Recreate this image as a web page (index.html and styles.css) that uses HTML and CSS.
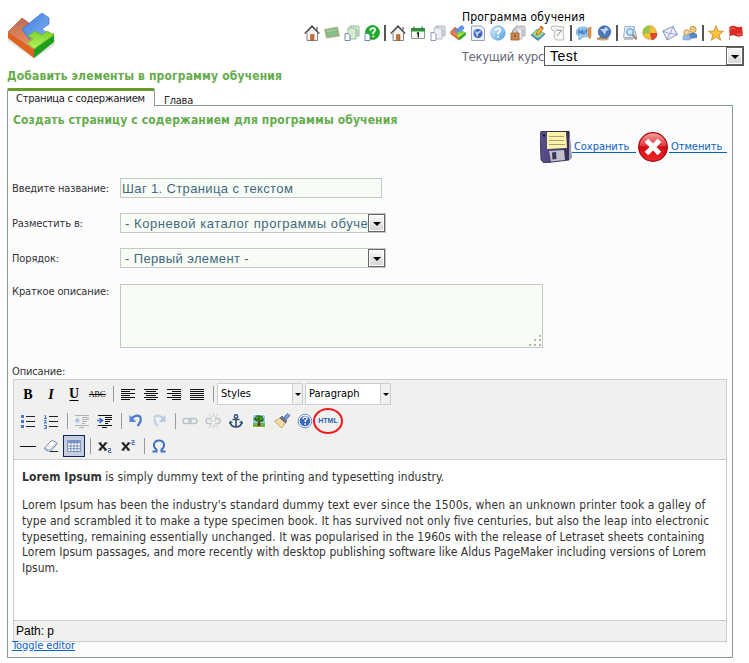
FILE: index.html
```html
<!DOCTYPE html>
<html lang="ru">
<head>
<meta charset="utf-8">
<title>Программа обучения</title>
<link rel="stylesheet" href="styles.css">
</head>
<body>
<svg class="defs" aria-hidden="true">
  <defs>
    <linearGradient id="gb" x1="0" y1="0" x2="1" y2="1"><stop offset="0" stop-color="#3f78dc"/><stop offset="1" stop-color="#7fb4f4"/></linearGradient>
    <linearGradient id="go" x1="0" y1="0" x2="0" y2="1"><stop offset="0" stop-color="#b96a58"/><stop offset="1" stop-color="#f5965e"/></linearGradient>
    <linearGradient id="gg" x1="0" y1="0" x2="0" y2="1"><stop offset="0" stop-color="#7fd02c"/><stop offset="1" stop-color="#b4f45c"/></linearGradient>
    <linearGradient id="gr" x1="0" y1="0" x2="0" y2="1"><stop offset="0" stop-color="#f7a0a0"/><stop offset=".45" stop-color="#e23a3c"/><stop offset=".5" stop-color="#d40a10"/><stop offset="1" stop-color="#f02a2a"/></linearGradient>
    <linearGradient id="gs" x1="0" y1="0" x2="1" y2="1"><stop offset="0" stop-color="#e8f6ff"/><stop offset="1" stop-color="#4b9be0"/></linearGradient>
    <linearGradient id="gf" x1="0" y1="0" x2="1" y2="0"><stop offset="0" stop-color="#5a528c"/><stop offset="1" stop-color="#332c58"/></linearGradient>
    <symbol id="cubes" viewBox="0 0 48 48">
      <path d="M1 22v7l26 18 21-14v-8l-21 14z" fill="#c9c9c9" opacity=".5"/>
      <path d="M1 20v6l26 20v-8z" fill="#e0621c"/>
      <path d="M27 37v9l20-16v-9z" fill="#1fa01c"/>
      <path d="M1 20L15 6l7 5-7 7 19 13-7 7z" fill="url(#go)" stroke="#c4582c" stroke-width=".7"/>
      <path d="M15 17L35 1l7 5v6l-7 5 6 5-6 4-6-4-7 5z" fill="url(#gb)" stroke="#3a6cc4" stroke-width=".7"/>
      <path d="M21 24l7-5 7 4 5-4 7 4-20 14-7-6 6-4z" fill="url(#gg)" stroke="#5cba20" stroke-width=".7"/>
    </symbol>
    <symbol id="home" viewBox="0 0 16 16"><path d="M3 7.500v8h10.500v-8L8 2z" fill="#f6f3ee" stroke="#777" stroke-width=".9"/><path d="M12 2h2v4l-2-2z" fill="#999"/><path d="M.6 8.600L8 1l7.400 7.600" fill="none" stroke="#444" stroke-width="1.300"/><path d="M6.500 9.500h3.500v6H6.500z" fill="#c4703a" stroke="#8a4a20" stroke-width=".5"/></symbol>
    <symbol id="board" viewBox="0 0 16 16"><path d="M.5 4.500l13-2.500 2 9L2.500 13z" fill="#86bd8c" stroke="#c8a878" stroke-width=".9"/><path d="M3 6.500l9-1.500" stroke="#a8d4ac"/></symbol>
    <symbol id="pages" viewBox="0 0 16 16"><path d="M6 1h8q1 0 1 1v9h-2V5H6z" fill="#e4e7ee" stroke="#9ea5b4" stroke-width=".8"/><path d="M4 3h8v11H4z" fill="#eef0f6" stroke="#a4abba" stroke-width=".8"/><path d="M1 7.500h3l2 2v6H1z" fill="#fff" stroke="#8090b8" stroke-width=".9"/></symbol>
    <symbol id="gpages" viewBox="0 0 16 16"><path d="M6 1h8q1 0 1 1v9h-2V5H6z" fill="#dcefdc" stroke="#78a878" stroke-width=".8"/><path d="M4 3h8v11H4z" fill="#d5ecd5" stroke="#86b486" stroke-width=".8"/><path d="M1 8.500h3l2 2v5H1z" fill="#fff" stroke="#6080b0" stroke-width=".9"/></symbol>
    <symbol id="ghelp" viewBox="0 0 16 16"><circle cx="8.500" cy="7.500" r="7" fill="#1dae27" stroke="#128a1c" stroke-width=".7"/><path d="M6.200 5.500q.5-2.500 2.800-2.300 2.500.3 2 2.300-.3 1-1.800 2v1.800" fill="none" stroke="#fff" stroke-width="1.800"/><path d="M8.400 10.700h1.800v1.500H8.400z" fill="#fff"/><path d="M1 8.500h3l2 2v5H1z" fill="#fff" stroke="#6080b0" stroke-width=".9"/></symbol>
    <symbol id="cal" viewBox="0 0 16 16"><path d="M1.500 3.500h13v10h-13z" fill="#f4f8f2" stroke="#889888"/><path d="M1 3h14v3.500H1z" fill="#2d9436"/><path d="M4 1.500v3M12 1.500v3" stroke="#567" stroke-width="1.300"/><path d="M6.800 8.500L8.300 8v4.500" stroke="#222" fill="none" stroke-width="1.400"/></symbol>
    <symbol id="webpage" viewBox="0 0 16 16"><path d="M1.500 1h10l3 3v11.500h-13z" fill="#edf1fb" stroke="#8c98b8" stroke-width=".9"/><circle cx="8" cy="8.500" r="4.500" fill="#4068bc"/><path d="M5 6l3 1 2-2 1 2-3 2 0 3-2-2z" fill="#b9d2f6"/></symbol>
    <symbol id="bhelp" viewBox="0 0 16 16"><circle cx="8" cy="8" r="7.200" fill="url(#gs)" stroke="#6ca8e0" stroke-width=".8"/><path d="M5.700 6q.5-2.500 2.500-2.400 2.400.2 2 2.100-.3 1.100-2 2.100v1.600" fill="none" stroke="#fff" stroke-width="1.700"/><path d="M7.200 10.900H9v1.700H7.200z" fill="#fff"/></symbol>
    <symbol id="lockpages" viewBox="0 0 16 16"><path d="M6 1h8q1 0 1 1v9h-2V5H6z" fill="#e2e2ec" stroke="#999" stroke-width=".8"/><path d="M4 3h8v11H4z" fill="#ececf2" stroke="#a4a4b4" stroke-width=".8"/><path d="M2.500 8V6q2-3 4.500 0v2" fill="none" stroke="#998" stroke-width="1.200"/><path d="M1 8h8v7H1z" fill="#cd8850" stroke="#945828" stroke-width=".8"/><path d="M4.500 10h1v2h-1z" fill="#613"/></symbol>
    <symbol id="pencilbook" viewBox="0 0 16 16"><path d="M1 10l6-6 8 5-7 6.500z" fill="#3e8bd8" stroke="#2462a8" stroke-width=".6"/><path d="M2 9l5-5 7 4.500-6 5z" fill="#9edc80"/><path d="M6 10l1-3 4-6 2.500 2-4 6z" fill="#efb43c" stroke="#9a6020" stroke-width=".7"/><path d="M10.500 1.500l2.500 2" stroke="#d85848" stroke-width="1.500"/></symbol>
    <symbol id="paper" viewBox="0 0 16 16"><path d="M1 2l3-1 10 1-1 4 1 9-8 0-2-3 1-6-3-1z" fill="#f8f8f8" stroke="#aaa" stroke-width=".8"/><path d="M6 5l6 .5M7 11l4-5" stroke="#888" stroke-width=".9"/></symbol>
    <symbol id="chat" viewBox="0 0 16 16"><path d="M0 7q1-5 7-5t7 5-7 5l-4 3v-4Q0 10 0 7z" fill="#9fd0f2" stroke="#65a0d2" stroke-width=".8"/><path d="M3 4.500v5M6 4.500v5M3 7h3M8 6v3.500M8 4.300v1M10.300 4.300v3.500M10.300 8.500v1" stroke="#2457a2" stroke-width="1.100"/><path d="M12.500 3l2.500-1v9l-1.500 3-1-3z" fill="#ed9c32" stroke="#b05a20" stroke-width=".5"/></symbol>
    <symbol id="globe" viewBox="0 0 16 16"><ellipse cx="7" cy="13.500" rx="6" ry="2" fill="#c9aa82"/><circle cx="8.500" cy="7" r="6.300" fill="#4b78b8" stroke="#355c98" stroke-width=".6"/><path d="M4 4l4 0 2-2 3 3-3 1-1 4-2-3z" fill="#c3d8f2"/><path d="M1 14l7-1 3 1" stroke="#a98358" fill="none"/></symbol>
    <symbol id="search" viewBox="0 0 16 16"><path d="M3 1.500h9v11H1.500z" fill="#e8f2fc" stroke="#8ea8cc" stroke-width=".9"/><path d="M12 2l3 11H9" fill="#cad6e6" stroke="#90a0b4" stroke-width=".8"/><circle cx="8" cy="7" r="3.400" fill="#c4e5fa" stroke="#5b8dbb"/><path d="M10.500 9.500l4 5" stroke="#a38254" stroke-width="1.800"/><path d="M2 14h9" stroke="#889"/></symbol>
    <symbol id="pie" viewBox="0 0 16 16"><circle cx="7.500" cy="7.500" r="6.800" fill="#f5c13c" stroke="#ca9028" stroke-width=".7"/><path d="M7.500 8V.7A7 7 0 0 0 1 9z" fill="#8dc650"/><path d="M8.500 8.500H15q0 5-5 6.500z" fill="#e44632" stroke="#aa2c20" stroke-width=".6"/></symbol>
    <symbol id="mail" viewBox="0 0 16 16"><path d="M.8 6L11 1.500l4.300 8L5.200 15z" fill="#eceffc" stroke="#7c82b2" stroke-width=".9"/><path d="M.8 6l7.500 3L11 1.500M5.200 15l2-6M15.300 9.500L9 8.500" fill="none" stroke="#8d92c0" stroke-width=".8"/></symbol>
    <symbol id="users" viewBox="0 0 16 16"><path d="M7 14V9q3-3 8 0v4z" fill="#5686c8"/><circle cx="11" cy="4.500" r="3.200" fill="#f4c878" stroke="#bd8330" stroke-width=".8"/><path d="M1 15v-4q3-4 7 0v4z" fill="#94bce8" stroke="#6b96c0" stroke-width=".5"/><circle cx="4.500" cy="7.500" r="2.700" fill="#fad69c" stroke="#ba842e" stroke-width=".8"/></symbol>
    <symbol id="star" viewBox="0 0 16 16"><path d="M8 .8l2 5.200 5.500.3-4.300 3.500 1.500 5.500L8 12l-4.700 3.300 1.500-5.500L.5 6.300 6 6z" fill="#fbc23e" stroke="#c88528" stroke-width=".8"/></symbol>
    <symbol id="flag" viewBox="0 0 16 16"><path d="M1.500 2v13" stroke="#c8a8a0"/><path d="M1.500 2Q5 0 8 1.500t6 0l1 9q-4 2-7 .5t-6 0z" fill="#d92a24"/><path d="M2 4q3-2 5 0M9 9q3 1 5 0" stroke="#f27a6c" fill="none"/></symbol>

    <symbol id="bold" viewBox="0 0 22 22"><text x="11" y="16" class="glyph">B</text></symbol>
    <symbol id="italic" viewBox="0 0 22 22"><text x="11" y="16" class="glyph gi">I</text></symbol>
    <symbol id="under" viewBox="0 0 22 22"><text x="11" y="15" class="glyph">U</text><path d="M6.500 17.500h9" stroke="#000"/></symbol>
    <symbol id="strike" viewBox="0 0 22 22"><text x="11" y="14" class="glyph gx">ABC</text><path d="M3 11.500h17" stroke="#000"/></symbol>
    <symbol id="al" viewBox="0 0 22 22"><path d="M4 6.500h14M4 8.500h9M4 10.500h14M4 12.500h9M4 14.500h14M4 16.500h9" stroke="#111"/></symbol>
    <symbol id="ac" viewBox="0 0 22 22"><path d="M4 6.500h14M6 8.500h10M4 10.500h14M6 12.500h10M4 14.500h14M6 16.500h10" stroke="#111"/></symbol>
    <symbol id="ar" viewBox="0 0 22 22"><path d="M4 6.500h14M9 8.500h9M4 10.500h14M9 12.500h9M4 14.500h14M9 16.500h9" stroke="#111"/></symbol>
    <symbol id="aj" viewBox="0 0 22 22"><path d="M4 6.500h14M4 8.500h14M4 10.500h14M4 12.500h14M4 14.500h14M4 16.500h14" stroke="#111"/></symbol>
    <symbol id="ul" viewBox="0 0 22 22"><path d="M9 6.500h9M9 11.500h9M9 16.500h9" stroke="#222"/><path d="M4 5h3v3H4zM4 10h3v3H4zM4 15h3v3H4z" fill="#4a76c8"/></symbol>
    <symbol id="ol" viewBox="0 0 22 22"><path d="M9 6.500h9M9 11.500h9M9 16.500h9" stroke="#222"/><path d="M4.500 5.500h1v3M4 8.500h3M4 10.500h2v1.500l-2 1h3M4 15.500h2.500v3H4M5 17h1.500" fill="none" stroke="#4a76c8"/></symbol>
    <symbol id="outd" viewBox="0 0 22 22"><path d="M4 5.500h14M11 7.500h7M11 9.500h7M11 11.500h5M11 13.500h3M4 15.500h14M8 17.500h5" stroke="#b0b0b0"/><path d="M9 10.500H5M7.500 8L4.500 10.500 7.500 13" stroke="#a9c2e2" fill="none" stroke-width="1.500"/></symbol>
    <symbol id="ind" viewBox="0 0 22 22"><path d="M4 5.500h14M11 7.500h7M11 9.500h7M11 11.500h5M11 13.500h3M4 15.500h14M8 17.500h5" stroke="#111"/><path d="M3 10.500h5M5.500 8l3 2.500-3 2.500" stroke="#3d6fc4" fill="none" stroke-width="1.500"/></symbol>
    <symbol id="undo" viewBox="0 0 22 22"><path d="M6 9q5-5 9-2.500 2.500 4-2.500 9.500" fill="none" stroke="#4b78cc" stroke-width="2.200"/><path d="M4.500 5v7h7z" fill="#5683d4"/></symbol>
    <symbol id="redo" viewBox="0 0 22 22"><path d="M16 9Q11 4 7 6.500q-2 4 2.500 9.500" fill="none" stroke="#c0cfe4" stroke-width="2.200"/><path d="M17.500 5v7h-7z" fill="#b9cae4"/></symbol>
    <symbol id="link" viewBox="0 0 22 22"><rect x="4" y="8.500" width="8" height="5" rx="2.500" fill="none" stroke="#bcc3cb" stroke-width="1.500"/><rect x="10" y="8.500" width="8" height="5" rx="2.500" fill="none" stroke="#bcc3cb" stroke-width="1.500"/></symbol>
    <symbol id="unlink" viewBox="0 0 22 22"><path d="M9.500 9Q4 7.500 4 11t5.500 2.500M13 9q5-1.500 5 2t-5 2.500" fill="none" stroke="#bcc3cb" stroke-width="1.600"/><path d="M7 4l3 4M11.500 3v4M16 4l-3 4M7 18l2-3M11.500 18v-3M16 18l-3-3M8 11h6" stroke="#c0c6cd" stroke-width=".9"/></symbol>
    <symbol id="anchor" viewBox="0 0 22 22"><path d="M11 8v9M7.500 9.500h7M5 12q1 5 6 5t6-5" fill="none" stroke="#335078" stroke-width="1.600"/><circle cx="11" cy="6.500" r="1.700" fill="none" stroke="#335078" stroke-width="1.400"/><path d="M4 14l1-3.500 3 2zM18 14l-1-3.500-3 2z" fill="#335078"/></symbol>
    <symbol id="image" viewBox="0 0 22 22"><path d="M4 4h14v14H4z" fill="#fff"/><path d="M5 5h12v8H5z" fill="#8fcaf0"/><path d="M5 13h12v4H5z" fill="#70b438"/><path d="M10 11h2l.5 5h-3z" fill="#5b3819"/><path d="M6 10q-1-2 1.500-3Q9 4 11.500 5.500 15 5 15 8q2 2-.5 3.500-4 1.500-8.500-1.500z" fill="#33751c"/><path d="M8 8l2-1M12 9l2-1" stroke="#90c048"/></symbol>
    <symbol id="clean" viewBox="0 0 22 22"><path d="M3.500 11l5.500-3 5.500 5-4 5z" fill="#f1dda0" stroke="#b0985a" stroke-width=".8"/><path d="M9 8L11 6l5 5-1.500 2z" fill="#68748c" stroke="#4a5468" stroke-width=".6"/><path d="M12.500 7.500L16.500 3.500 19 5.500l-4 4.500z" fill="#7c9ad0" stroke="#45629c" stroke-width=".7"/></symbol>
    <symbol id="help" viewBox="0 0 22 22"><circle cx="11" cy="11" r="6.800" fill="#fff" stroke="#4472bc" stroke-width=".8"/><circle cx="11" cy="11" r="5.300" fill="#3a68c0"/><path d="M9 9q.4-2 2.100-2 2.200.2 1.900 1.900-.2.900-1.800 1.800v1.400" fill="none" stroke="#fff" stroke-width="1.500"/><path d="M10.400 13.300H12v1.500h-1.600z" fill="#fff"/></symbol>
    <symbol id="hr" viewBox="0 0 22 22"><path d="M3 11.500h16" stroke="#111"/></symbol>
    <symbol id="eraser" viewBox="0 0 22 22"><path d="M4.500 13L11 6q1-1 2.500 0l3 1.500q1 1 0 2L11 15.500q-1 1-2.500.5L5 14.500q-1-.5-.5-1.500z" fill="#fff" stroke="#7187ac"/><path d="M4.500 13l5 2 7-7" fill="none" stroke="#9aabca"/><path d="M10 16.500h8" stroke="#222"/></symbol>
    <symbol id="grid" viewBox="0 0 22 22"><path d="M4 5h14v12H4z" fill="#fff" stroke="#6a86b4"/><path d="M4 5h14v3H4z" fill="#7d9ace"/><path d="M4 11h14M4 14h14M7.500 5v12M11 5v12M14.500 5v12" stroke="#6a86b4"/></symbol>
    <symbol id="sub" viewBox="0 0 22 22"><path d="M5.500 8l6.500 7M12 8l-6.500 7" stroke="#222" stroke-width="2"/><path d="M4.500 8h3M10.500 8h3M4.500 15h3M10 15h3" stroke="#222" stroke-width="1.200"/><path d="M14 13.500h2.500v2h-2v2h3" fill="none" stroke="#3a6cc8"/></symbol>
    <symbol id="sup" viewBox="0 0 22 22"><path d="M5.500 8l6.500 7M12 8l-6.500 7" stroke="#222" stroke-width="2"/><path d="M4.500 8h3M10.500 8h3M4.500 15h3M10 15h3" stroke="#222" stroke-width="1.200"/><path d="M14.500 5.500h2.500v2h-2v2h3" fill="none" stroke="#3a6cc8"/></symbol>
    <symbol id="omega" viewBox="0 0 22 22"><path d="M4.500 16.500h4v-2Q5.500 12.500 6 9q1-3.500 5-3.500T16 9q.5 3.500-2.500 5.500v2h4" fill="none" stroke="#3f70c8" stroke-width="2"/></symbol>
  </defs>
</svg>

<header class="header">
  <svg class="logo"><use href="#cubes"/></svg>
  <div class="header-right">
    <div class="page-name">Программа обучения</div>
    <nav class="icons">
      <svg><use href="#home"/></svg><svg><use href="#board"/></svg><svg><use href="#gpages"/></svg><svg><use href="#ghelp"/></svg>
      <i></i>
      <svg><use href="#home"/></svg><svg><use href="#cal"/></svg><svg><use href="#pages"/></svg><svg><use href="#cubes"/></svg><svg><use href="#webpage"/></svg><svg><use href="#bhelp"/></svg><svg><use href="#lockpages"/></svg><svg><use href="#pencilbook"/></svg><svg><use href="#paper"/></svg>
      <i></i>
      <svg><use href="#chat"/></svg><svg><use href="#globe"/></svg>
      <i></i>
      <svg><use href="#search"/></svg><svg><use href="#pie"/></svg><svg><use href="#mail"/></svg><svg><use href="#users"/></svg>
      <i></i>
      <svg><use href="#star"/></svg><svg><use href="#flag"/></svg>
    </nav>
    <div class="course"><span class="course-label">Текущий курс</span><div class="course-select"><span>Test</span><b class="drop"></b></div></div>
  </div>
</header>

<h1>Добавить элементы в программу обучения</h1>
<div class="tabs"><div class="tab active">Страница с содержанием</div><div class="tab">Глава</div></div>

<main class="panel">
  <h2>Создать страницу с содержанием для программы обучения</h2>
  <div class="actions">
    <svg viewBox="0 0 32 32"><path d="M0 1.500L2 0h27l2 26-2 3-25 3L1 29z" fill="url(#gf)" stroke="#292347" stroke-width=".8"/><path d="M29 0l3 27-3 2.500z" fill="#9b98a8"/><path d="M7 1h19l1 16-20 1z" fill="#fbf3a8"/><path d="M9 5.500h15M9 9.500h15M9 13.500h16" stroke="#a9a276" stroke-width="1.200"/><path d="M9 20l15-1 1 10-14 1.500z" fill="#bfc0cb"/><path d="M12 21.500l4-.5.500 7-4 .5z" fill="#3a3558"/><path d="M3 3.500h2v2H3z" fill="#15122c"/></svg>
    <a class="save">Сохранить</a>
    <svg viewBox="0 0 32 32"><circle cx="16" cy="16" r="14.300" fill="url(#gr)" stroke="#a00c10" stroke-width="1.200"/><path d="M9.500 9.500l13 13M22.500 9.500l-13 13" stroke="#fff" stroke-width="5"/></svg>
    <a class="cancel">Отменить</a>
  </div>
  <div class="form">
    <label>Введите название:</label><div class="field text">Шаг 1. Страница с текстом</div>
    <label>Разместить в:</label><div class="field select"><span class="catalog">- Корневой каталог программы обуче</span><b class="drop"></b></div>
    <label>Порядок:</label><div class="field select"><span>- Первый элемент -</span><b class="drop"></b></div>
    <label class="top">Краткое описание:</label><div class="field area"><svg class="grip" viewBox="0 0 13 13"><path d="M10 1h2v2h-2zM5 5h2v2H5zM10 5h2v2h-2zM0 10h2v2H0zM5 10h2v2H5zM10 10h2v2h-2z" fill="#b3bab3"/></svg></div>
  </div>
  <div class="desc-label">Описание:</div>
  <div class="editor">
    <div class="toolbar">
      <div class="row first">
        <svg><use href="#bold"/></svg><svg><use href="#italic"/></svg><svg><use href="#under"/></svg><svg><use href="#strike"/></svg><i></i>
        <svg><use href="#al"/></svg><svg><use href="#ac"/></svg><svg><use href="#ar"/></svg><svg><use href="#aj"/></svg><i></i>
        <div class="mini"><span>Styles</span><b></b></div><div class="mini"><span>Paragraph</span><b></b></div>
      </div>
      <div class="row">
        <svg><use href="#ul"/></svg><svg><use href="#ol"/></svg><i></i>
        <svg><use href="#outd"/></svg><svg><use href="#ind"/></svg><i></i>
        <svg><use href="#undo"/></svg><svg><use href="#redo"/></svg><i></i>
        <svg><use href="#link"/></svg><svg><use href="#unlink"/></svg><svg><use href="#anchor"/></svg><svg><use href="#image"/></svg><svg><use href="#clean"/></svg><svg><use href="#help"/></svg>
        <div class="html-btn">HTML</div>
      </div>
      <div class="row">
        <svg><use href="#hr"/></svg><svg><use href="#eraser"/></svg><svg class="on"><use href="#grid"/></svg><i></i>
        <svg><use href="#sub"/></svg><svg><use href="#sup"/></svg><i></i><svg><use href="#omega"/></svg>
      </div>
    </div>
    <div class="content">
      <p><span class="l1"><strong>Lorem Ipsum</strong> is simply dummy text of the printing and typesetting industry.</span></p>
      <p><span class="l2">Lorem Ipsum has been the industry's standard dummy text ever since the 1500s, when an unknown printer took a galley of</span><br>
      <span class="l3">type and scrambled it to make a type specimen book. It has survived not only five centuries, but also the leap into electronic</span><br>
      <span class="l4">typesetting, remaining essentially unchanged. It was popularised in the 1960s with the release of Letraset sheets containing</span><br>
      <span class="l5">Lorem Ipsum passages, and more recently with desktop publishing software like Aldus PageMaker including versions of Lorem</span><br>
      <span>Ipsum.</span></p>
    </div>
    <div class="status">Path: p</div>
  </div>
  <a class="toggle">Toggle editor</a>
</main>
</body>
</html>
```
FILE: styles.css
```css
*, ::after { box-sizing: border-box; }
body { margin: 0; width: 749px; height: 663px; overflow: hidden; background: #fff; color: #333; font: 12px/16px "DejaVu Sans Condensed", "DejaVu Sans", sans-serif; font-stretch: condensed; white-space: nowrap; }
.defs { position: absolute; width: 0; height: 0; }
.header { display: flex; justify-content: space-between; height: 68px; padding: 0 5px 0 7px; }
.logo { width: 48px; height: 48px; margin-top: 12px; }
.header-right { display: flex; flex-direction: column; align-items: flex-end; padding-top: 9px; }
.page-name { width: 282px; height: 16px; color: #000; letter-spacing: .15px; }
.icons { display: flex; gap: 4px; height: 16px; }
.icons svg { width: 16px; height: 16px; }
.icons i { width: 2px; background: #555; }
.course { display: flex; height: 20px; margin-top: 5px; font-size: 13px; line-height: 21px; color: #68687c; }
.course-label { letter-spacing: -.32px; }
.course-select { display: flex; justify-content: space-between; width: 200px; border: 1px solid #555; background: #fff; padding-left: 5px; font: 14px/19px "Liberation Sans", sans-serif; letter-spacing: .5px; color: #000; }
.drop { position: relative; flex: none; width: 17px; height: 18px; border: 1px solid #666; background: linear-gradient(#fafafa, #d4d4d4); box-shadow: inset 0 0 0 1px #fff; }
.drop::after, .mini b::after { content: ""; position: absolute; left: 4px; top: 7px; border: 4px solid transparent; border-top-color: #000; border-bottom: 0; }
h1, h2 { margin: 0; font-size: 12px; line-height: 16px; color: #66ac4c; letter-spacing: .14px; }
h1 { height: 20px; padding-left: 7px; letter-spacing: .16px; }
.tabs { display: flex; height: 18px; margin-left: 7px; position: relative; z-index: 1; font-size: 11px; letter-spacing: -.27px; color: #222; }
.tab { height: 17px; padding-left: 9px; padding-top: 4px; line-height: 17px; }
.tab.active { width: 148px; height: 18px; border: 1px solid #8a9a94; border-top: 3px solid #6a9c2a; border-bottom: 0; border-radius: 2px 2px 0 0; background: #fcfcff; padding: 0 0 0 8px; line-height: 16px; }
.panel { margin-left: 7px; margin-top: -1px; width: 726px; height: 553px; border: 1px solid #8a9a94; background: #fcfcff; padding: 6px 5px 0 5px; }
h2 { height: 19px; }
.actions { display: flex; justify-content: flex-end; align-items: center; height: 32px; font-size: 11px; letter-spacing: -.05px; }
.actions svg { width: 32px; height: 32px; }
.actions a { height: 12px; line-height: 12px; margin: 0 1px 0 0; padding-left: 2px; border-bottom: 1px solid #0a62c4; color: #0a62c4; }
.save { width: 64px; }
.actions .cancel { width: 58px; margin-right: 0; }
.form { display: grid; grid-template-columns: 107px 1fr; grid-template-rows: 20px 20px 20px auto; row-gap: 15px; margin-top: 15px; font-size: 11px; }
.form label { line-height: 21px; margin-left: -1px; letter-spacing: -.12px; }
.field { height: 20px; border: 1px solid #c4c8c4; background: #f7fcf6; color: #44687e; font: 13px/19px "Liberation Sans", sans-serif; letter-spacing: .37px; }
.text { width: 262px; padding-left: 1px; }
.select { display: flex; justify-content: space-between; width: 266px; padding-left: 4px; }
.catalog { letter-spacing: .54px; }
.form .area, .form .top { margin-top: 1px; }
.form .top { line-height: 16px; }
.area { position: relative; width: 423px; height: 64px; }
.grip { position: absolute; right: 0; bottom: 0; width: 13px; height: 13px; }
.desc-label { height: 16px; margin-top: 15px; margin-left: -1px; font-size: 11px; line-height: 18px; letter-spacing: -.15px; }
.editor { width: 714px; height: 263px; border: 1px solid #ccc; background: #fff; }
.toolbar { height: 80px; background: #f0f0ee; border-bottom: 1px solid #ccc; padding: 3px 0 0 3px; }
.row { display: flex; align-items: center; height: 22px; margin-bottom: 3px; }
.first { margin-bottom: 5px; }
.row > svg { width: 22px; height: 22px; margin-right: 1px; flex: none; }
.row > i { width: 1px; height: 16px; margin: 0 3px 0 4px; background: #999; }
.row .on { border: 1px solid #0a246a; background: #c6cede; }
.glyph { text-anchor: middle; font-family: "Liberation Serif", serif; font-weight: bold; font-size: 14px; }
.gi { font-style: italic; }
.gx { font-size: 8px; font-weight: normal; }
.mini { display: flex; justify-content: space-between; width: 86px; height: 22px; margin-right: 2px; border: 1px solid #ccc; background: #fff; padding-left: 3px; font-size: 11px; line-height: 20px; color: #000; }
.mini b { position: relative; width: 10px; border-left: 1px solid #ccc; background: #f0f0ee; }
.mini b::after { left: 2px; top: 9px; border-width: 3px 3px 0; }
.html-btn { position: relative; width: 22px; text-align: center; color: #2b5cb0; font: bold 7px/22px "Liberation Sans", sans-serif; }
.html-btn::after { content: ""; position: absolute; left: -4px; top: -2px; width: 30px; height: 26px; border: 2px solid #f01820; border-radius: 50%; }
.content { height: 160px; padding: 10px 0 0 8px; line-height: 15.75px; }
.content p { margin: 0 0 12.25px; }
.l1 { letter-spacing: .06px; }
.l2 { letter-spacing: .115px; }
.l3 { letter-spacing: .077px; }
.l4 { letter-spacing: .06px; }
.l5 { letter-spacing: .024px; }
.status { height: 21px; border-top: 1px solid #ccc; background: #f0f0ee; padding-left: 2px; color: #000; font: 12px/21px "Liberation Sans", sans-serif; }
.toggle { display: block; margin-left: -1px; font-size: 11px; line-height: 8px; letter-spacing: -.06px; color: #0a62c4; text-decoration: underline; }
```
